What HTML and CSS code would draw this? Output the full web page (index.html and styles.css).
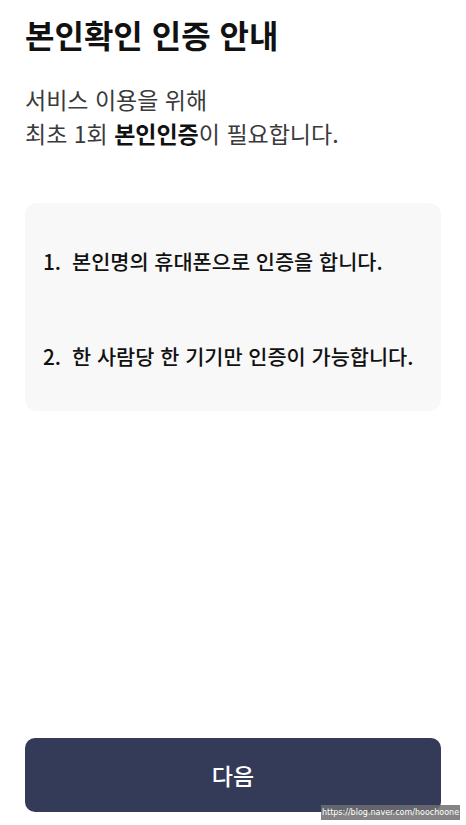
FILE: index.html
```html
<!DOCTYPE html>
<html lang="ko">
<head>
<meta charset="utf-8">
<link rel="stylesheet" href="styles.css">
</head>
<body>
<div class="page">
  <h1 class="title">본인확인 인증 안내</h1>
  <p class="desc">서비스 이용을 위해<br>최초 1회 <strong>본인인증</strong>이 필요합니다.</p>
  <div class="card">
    <ol class="list">
      <li><span class="num">1.</span><span>본인명의 휴대폰으로 인증을 합니다.</span></li>
      <li><span class="num">2.</span><span>한 사람당 한 기기만 인증이 가능합니다.</span></li>
    </ol>
  </div>
  <div class="spacer"></div>
  <button class="next">다음</button>
</div>
<div class="watermark">https://blog.naver.com/hoochoone</div>
</body>
</html>
```
FILE: styles.css
```css
html, body {
  margin: 0;
  padding: 0;
  background: #ffffff;
}
body {
  font-family: "Noto Sans CJK KR", "Noto Sans", sans-serif;
  color: #111;
}
.page {
  height: 825px;
  box-sizing: border-box;
  padding: 12px 25px 13px 25px;
  display: flex;
  flex-direction: column;
}
.title {
  margin: 0;
  font-size: 32px;
  line-height: 44px;
  font-weight: 700;
  color: #111;
}
.desc {
  margin: 26px 0 0 0;
  font-size: 23px;
  line-height: 34px;
  color: #3a3a3a;
  font-weight: 400;
}
.desc strong {
  font-weight: 700;
  color: #111;
}
.card {
  margin-top: 53px;
  background: #f8f8f8;
  border-radius: 12px;
  height: 208px;
  box-sizing: border-box;
  padding: 44px 17px 0 18px;
}
.list {
  list-style: none;
  margin: 0;
  padding: 0;
  display: flex;
  flex-direction: column;
  gap: 67px;
}
.list li {
  display: flex;
  font-size: 20.8px;
  line-height: 28px;
  font-weight: 500;
  color: #111;
}
.num {
  width: 29px;
  flex: none;
}
.spacer {
  flex: 1;
}
.next {
  height: 74px;
  border: none;
  border-radius: 10px;
  background: #343b58;
  color: #fff;
  font-family: inherit;
  font-size: 23px;
  font-weight: 500;
  width: 100%;
}
.watermark {
  position: absolute;
  left: 321px;
  top: 805px;
  width: 139px;
  height: 15px;
  background: rgba(110, 110, 110, 0.85);
  color: #fff;
  font-family: "DejaVu Sans", sans-serif;
  font-size: 8px;
  line-height: 15px;
  text-align: center;
  white-space: nowrap;
  overflow: hidden;
}
```
